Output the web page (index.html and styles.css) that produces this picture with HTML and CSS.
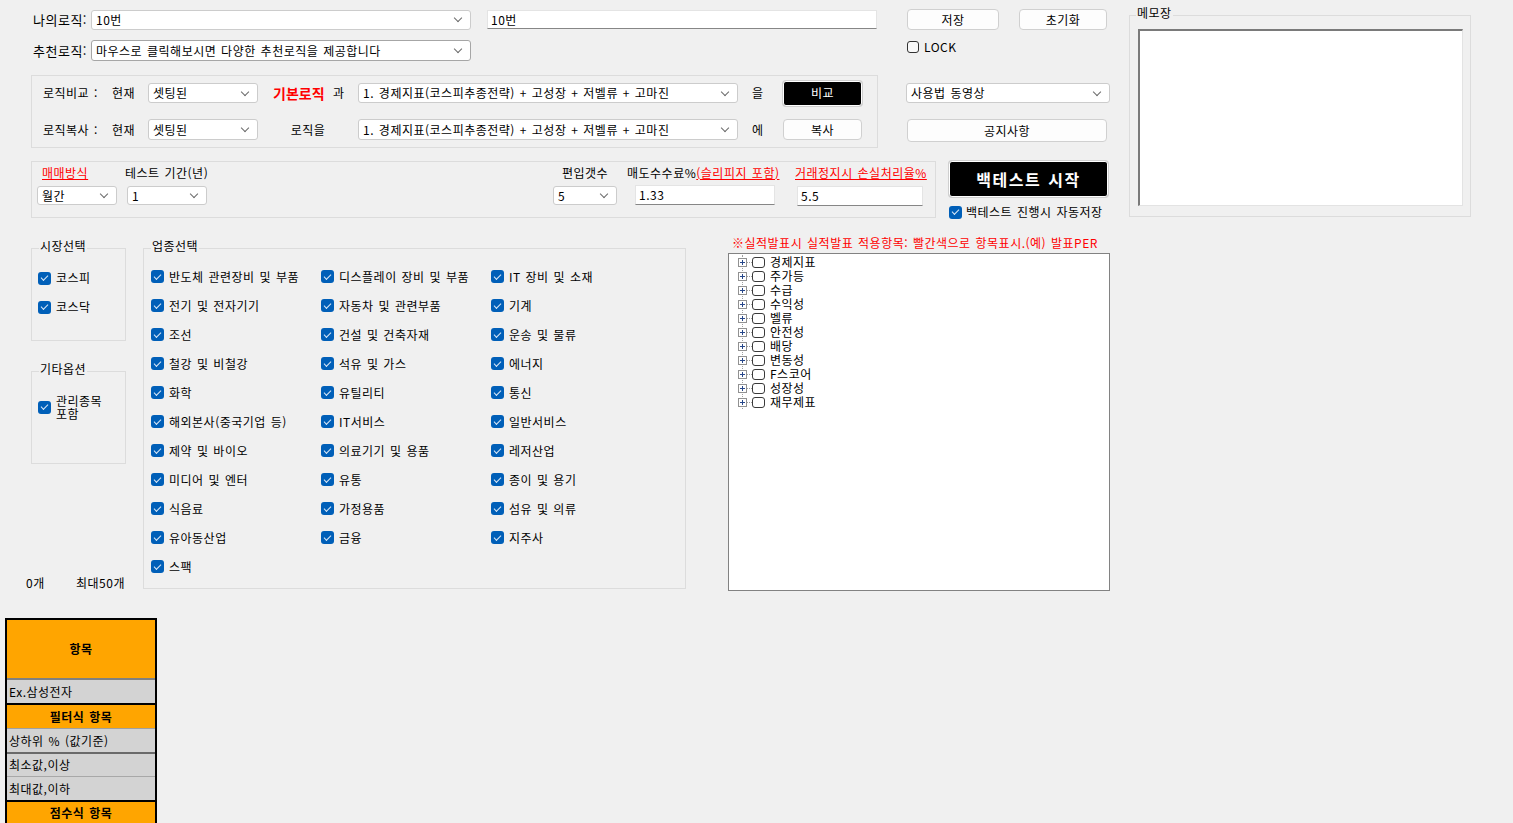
FILE: index.html
```html
<!DOCTYPE html>
<html lang="ko">
<head>
  <meta charset="UTF-8" />
  <title>백테스트</title>
  <link rel="stylesheet" href="styles.css">
</head>
<body>
<div class="form">
  <div class="main">

    <!-- logic name / recommended logic -->
    <div class="line top-1">
      <span class="field-label">나의로직:</span>
      <div class="combo combo-logic">10번</div>
      <div class="textbox name-box">10번</div>
      <div class="btn save-btn">저장</div>
      <div class="btn reset-btn">초기화</div>
    </div>
    <div class="line top-2">
      <span class="field-label">추천로직:</span>
      <div class="combo combo-logic dark">마우스로 클릭해보시면 다양한 추천로직을 제공합니다</div>
      <label class="lock"><span class="box"></span>LOCK</label>
    </div>

    <!-- compare / copy -->
    <div class="compare-row">
      <div class="group compare">
        <div class="line cmp-a">
          <span class="cmp-label">로직비교 :</span>
          <span class="cmp-now">현재</span>
          <div class="combo combo-set">셋팅된</div>
          <span class="base-logic">기본로직</span>
          <span class="cmp-word">과</span>
          <div class="combo combo-logic">1. 경제지표(코스피추종전략) + 고성장 + 저벨류 + 고마진</div>
          <span class="cmp-post">을</span>
          <div class="btn btn-dark cmp-btn">비교</div>
        </div>
        <div class="line cmp-b">
          <span class="cmp-label">로직복사 :</span>
          <span class="cmp-now">현재</span>
          <div class="combo combo-set">셋팅된</div>
          <span class="cmp-mid">로직을</span>
          <div class="combo combo-logic">1. 경제지표(코스피추종전략) + 고성장 + 저벨류 + 고마진</div>
          <span class="cmp-post">에</span>
          <div class="btn cmp-btn copy-btn">복사</div>
        </div>
      </div>
      <div class="side">
        <div class="combo combo-video">사용법 동영상</div>
        <div class="btn notice">공지사항</div>
      </div>
    </div>

    <!-- backtest parameters -->
    <div class="bt-row">
      <div class="group params">
        <div class="param p1">
          <span class="param-label warn pad">매매방식</span>
          <div class="combo combo-small">월간</div>
        </div>
        <div class="param p2">
          <span class="param-label">테스트 기간(년)</span>
          <div class="combo combo-small shift">1</div>
        </div>
        <div class="param p3">
          <span class="param-label center">편입갯수</span>
          <div class="combo combo-count">5</div>
        </div>
        <div class="param p4">
          <span class="param-label">매도수수료%<span class="warn">(슬리피지 포함)</span></span>
          <div class="textbox fee-box">1.33</div>
        </div>
        <div class="param p5">
          <span class="param-label warn">거래정지시 손실처리율%</span>
          <div class="textbox loss-box">5.5</div>
        </div>
      </div>
      <div class="start">
        <div class="btn btn-dark start-btn">백테스트 시작</div>
        <label class="opt autosave"><span class="chk"></span>백테스트 진행시 자동저장</label>
      </div>
    </div>

    <!-- market / industry / item tree -->
    <div class="sel-row">
      <div class="side-col">
        <div class="group market">
          <span class="group-title">시장선택</span>
          <label class="opt"><span class="chk"></span>코스피</label>
          <label class="opt"><span class="chk"></span>코스닥</label>
        </div>
        <div class="group etc">
          <span class="group-title">기타옵션</span>
          <label class="opt tall"><span class="chk"></span><span>관리종목<br>포함</span></label>
        </div>
        <div class="count">
          <span class="count-min">0개</span>
          <span>최대50개</span>
        </div>
      </div>

      <div class="group industry">
        <span class="group-title">업종선택</span>
        <div class="industry-grid">
          <label class="opt"><span class="chk"></span>반도체 관련장비 및 부품</label>
          <label class="opt"><span class="chk"></span>디스플레이 장비 및 부품</label>
          <label class="opt"><span class="chk"></span>IT 장비 및 소재</label>
          <label class="opt"><span class="chk"></span>전기 및 전자기기</label>
          <label class="opt"><span class="chk"></span>자동차 및 관련부품</label>
          <label class="opt"><span class="chk"></span>기계</label>
          <label class="opt"><span class="chk"></span>조선</label>
          <label class="opt"><span class="chk"></span>건설 및 건축자재</label>
          <label class="opt"><span class="chk"></span>운송 및 물류</label>
          <label class="opt"><span class="chk"></span>철강 및 비철강</label>
          <label class="opt"><span class="chk"></span>석유 및 가스</label>
          <label class="opt"><span class="chk"></span>에너지</label>
          <label class="opt"><span class="chk"></span>화학</label>
          <label class="opt"><span class="chk"></span>유틸리티</label>
          <label class="opt"><span class="chk"></span>통신</label>
          <label class="opt"><span class="chk"></span>해외본사(중국기업 등)</label>
          <label class="opt"><span class="chk"></span>IT서비스</label>
          <label class="opt"><span class="chk"></span>일반서비스</label>
          <label class="opt"><span class="chk"></span>제약 및 바이오</label>
          <label class="opt"><span class="chk"></span>의료기기 및 용품</label>
          <label class="opt"><span class="chk"></span>레저산업</label>
          <label class="opt"><span class="chk"></span>미디어 및 엔터</label>
          <label class="opt"><span class="chk"></span>유통</label>
          <label class="opt"><span class="chk"></span>종이 및 용기</label>
          <label class="opt"><span class="chk"></span>식음료</label>
          <label class="opt"><span class="chk"></span>가정용품</label>
          <label class="opt"><span class="chk"></span>섬유 및 의류</label>
          <label class="opt"><span class="chk"></span>유아동산업</label>
          <label class="opt"><span class="chk"></span>금융</label>
          <label class="opt"><span class="chk"></span>지주사</label>
          <label class="opt"><span class="chk"></span>스팩</label>
        </div>
      </div>

      <div class="tree-col">
        <div class="note">※실적발표시 실적발표 적용항목: 빨간색으로 항목표시.(예) 발표PER</div>
        <div class="tree">
          <ul class="nodes">
            <li class="node"><span class="plus"></span><span class="dots"></span><span class="tbox"></span>경제지표</li>
            <li class="node"><span class="plus"></span><span class="dots"></span><span class="tbox"></span>주가등</li>
            <li class="node"><span class="plus"></span><span class="dots"></span><span class="tbox"></span>수급</li>
            <li class="node"><span class="plus"></span><span class="dots"></span><span class="tbox"></span>수익성</li>
            <li class="node"><span class="plus"></span><span class="dots"></span><span class="tbox"></span>벨류</li>
            <li class="node"><span class="plus"></span><span class="dots"></span><span class="tbox"></span>안전성</li>
            <li class="node"><span class="plus"></span><span class="dots"></span><span class="tbox"></span>배당</li>
            <li class="node"><span class="plus"></span><span class="dots"></span><span class="tbox"></span>변동성</li>
            <li class="node"><span class="plus"></span><span class="dots"></span><span class="tbox"></span>F스코어</li>
            <li class="node"><span class="plus"></span><span class="dots"></span><span class="tbox"></span>성장성</li>
            <li class="node"><span class="plus"></span><span class="dots"></span><span class="tbox"></span>재무제표</li>
          </ul>
        </div>
      </div>
    </div>

    <!-- item header grid -->
    <div class="items">
      <div class="cell head big">항목</div>
      <div class="cell c-ex">Ex.삼성전자</div>
      <div class="cell head c-filter">필터식 항목</div>
      <div class="cell c-range">상하위 % (값기준)</div>
      <div class="cell c-min">최소값,이상</div>
      <div class="cell c-max">최대값,이하</div>
      <div class="cell head c-score">점수식 항목</div>
    </div>
  </div>

  <div class="group memo">
    <span class="group-title">메모장</span>
    <div class="memo-area"></div>
  </div>
</div>
</body>
</html>
```

FILE: styles.css
```css
* {
  box-sizing: border-box;
}
html, body {
  margin: 0;
  padding: 0;
}
body {
  width: 1513px;
  height: 823px;
  overflow: hidden;
  background-color: #f0f0f0;
  color: #000;
  font: 12px/14px "Noto Sans CJK KR", "Noto Sans", sans-serif;
  letter-spacing: 0.5px;
  word-spacing: 1px;
}

.form {
  display: flex;
  align-items: flex-start;
}
.main {
  width: 1120px;
  flex: none;
}

.line {
  display: flex;
  align-items: center;
  white-space: nowrap;
}

/* common controls */
.combo {
  display: flex;
  align-items: center;
  flex: none;
  height: 20px;
  padding-left: 4px;
  background-color: #fff;
  border: 1px solid #cccccc;
  border-radius: 3px;
  white-space: nowrap;
}
.combo::after {
  content: "";
  width: 5px;
  height: 5px;
  margin: -3px 9px 0 auto;
  border-right: 1px solid #6b6b6b;
  border-bottom: 1px solid #6b6b6b;
  transform: rotate(45deg);
}
.combo.dark {
  border-color: #a6a6a6;
}
.combo-logic { width: 380px; }
.combo-set { width: 110px; }
.combo-video { width: 204px; }
.combo-small { width: 80px; height: 19px; }
.combo-count { width: 64px; height: 19px; }

.textbox {
  display: flex;
  align-items: center;
  flex: none;
  height: 19px;
  padding-left: 3px;
  background-color: #fff;
  border: 1px solid #e4e4e4;
  border-bottom-color: #868686;
}

.btn {
  display: flex;
  align-items: center;
  justify-content: center;
  flex: none;
  height: 21px;
  background-color: #fdfdfd;
  border: 1px solid #d0d0d0;
  border-radius: 4px;
}
.btn-dark {
  background-color: #000;
  color: #fff;
  border: 1px solid #fff;
  border-radius: 3px;
  box-shadow: 0 0 0 1px #cfcfcf;
}

.opt {
  display: flex;
  align-items: center;
  height: 14px;
  white-space: nowrap;
}
.chk {
  display: inline-flex;
  align-items: center;
  justify-content: center;
  flex: none;
  width: 13px;
  height: 13px;
  margin-right: 5px;
  border-radius: 3px;
  background-color: #005fb8;
}
.chk::after {
  content: "";
  width: 6px;
  height: 3px;
  border-left: 1px solid #dbe9f7;
  border-bottom: 1px solid #dbe9f7;
  transform: translateY(-1px) rotate(-45deg);
}
.box {
  width: 12px;
  height: 12px;
  margin-right: 5px;
  border: 1px solid #333;
  border-radius: 3px;
  background-color: #f9f9f9;
}

.group {
  position: relative;
  border: 1px solid #dcdcdc;
  flex: none;
}
.group-title {
  position: absolute;
  top: -10px;
  left: 7px;
  padding: 0 1px;
  background-color: #f0f0f0;
  line-height: 14px;
}

.warn {
  color: #f00;
  text-decoration: underline;
}

/* top rows */
.top-1 {
  margin-top: 9px;
  height: 21px;
}
.top-2 {
  margin-top: 10px;
  height: 21px;
  align-items: flex-start;
}
.top-2 .combo {
  height: 21px;
}
.field-label {
  width: 87px;
  margin-right: 4px;
  text-align: right;
  font-size: 13px;
  line-height: 21px;
}
.name-box {
  width: 390px;
  margin-left: 16px;
}
.save-btn {
  width: 92px;
  margin-left: 30px;
}
.reset-btn {
  width: 88px;
  margin-left: 20px;
}
.lock {
  display: flex;
  align-items: center;
  margin: 1px 0 0 436px;
  height: 12px;
}

/* compare block */
.compare-row {
  display: flex;
  align-items: flex-start;
  margin-top: 14px;
}
.compare {
  margin-left: 31px;
  width: 847px;
  height: 73px;
  padding-top: 7px;
}
.cmp-a {
  height: 20px;
}
.cmp-b {
  height: 21px;
  margin-top: 16px;
}
.cmp-b .combo {
  height: 21px;
}
.cmp-label {
  width: 69px;
  margin-left: 11px;
}
.cmp-now {
  width: 36px;
}
.base-logic {
  width: 60px;
  margin-left: 15px;
  color: #f00;
  font-weight: bold;
  font-size: 14px;
  letter-spacing: 0;
}
.cmp-word {
  width: 25px;
}
.cmp-mid {
  width: 100px;
  text-align: center;
}
.cmp-post {
  width: 31px;
  margin-left: 14px;
}
.cmp-btn {
  width: 79px;
  height: 25px;
}
.copy-btn {
  height: 21px;
}

.side {
  width: 204px;
  margin-left: 28px;
  padding-top: 8px;
}
.notice {
  width: 200px;
  height: 23px;
  margin: 16px 0 0 1px;
}

/* backtest parameters */
.bt-row {
  display: flex;
  align-items: flex-start;
  margin-top: 13px;
}
.params {
  display: flex;
  width: 905px;
  height: 57px;
  margin-left: 31px;
  padding-top: 4px;
}
.param {
  display: flex;
  flex-direction: column;
  flex: none;
}
.param-label {
  height: 14px;
  white-space: nowrap;
}
.param-label.pad {
  padding-left: 5px;
}
.param-label.center {
  text-align: center;
}
.param .combo,
.param .textbox {
  margin-top: 6px;
}
.p1 { width: 80px; margin-left: 5px; }
.p2 { width: 90px; margin-left: 8px; }
.p2 .shift { margin-left: 2px; }
.p3 { width: 64px; margin-left: 338px; }
.p4 { width: 160px; margin-left: 10px; }
.p5 { width: 134px; margin-left: 8px; }
.p4 .fee-box {
  width: 140px;
  height: 20px;
  margin: 5px 0 0 8px;
}
.p5 .loss-box {
  width: 126px;
  height: 20px;
  margin-left: 2px;
}

.start {
  width: 159px;
  margin-left: 13px;
}
.start-btn {
  height: 36px;
  font-size: 16px;
  font-weight: bold;
  letter-spacing: 1.5px;
}
.autosave {
  height: 12px;
  margin-top: 9px;
}
.autosave .chk {
  margin-right: 4px;
}

/* selection area */
.sel-row {
  display: flex;
  align-items: flex-start;
}
.side-col {
  width: 95px;
  margin-left: 31px;
  flex: none;
}
.market,
.etc {
  height: 93px;
  margin-top: 30px;
  padding: 22px 0 0 6px;
}
.market .opt + .opt {
  margin-top: 15px;
}
.opt.tall {
  height: 26px;
  line-height: 13px;
}
.count {
  display: flex;
  height: 14px;
  margin: 112px 0 0 -5px;
  white-space: nowrap;
}
.count-min {
  width: 50px;
}

.industry {
  width: 543px;
  height: 341px;
  margin: 30px 0 0 17px;
  padding: 13px 0 0 7px;
}
.industry-grid {
  display: grid;
  grid-template-columns: repeat(3, 170px);
  grid-auto-rows: 29px;
  align-items: center;
}

.tree-col {
  width: 382px;
  margin: 18px 0 0 42px;
  flex: none;
}
.note {
  height: 14px;
  padding-left: 4px;
  color: #f00;
  white-space: nowrap;
}
.tree {
  height: 338px;
  margin-top: 3px;
  padding: 1px 0 0 9px;
  background-color: #fff;
  border: 1px solid #828282;
}
.nodes {
  position: relative;
  margin: 0;
  padding: 0;
  list-style: none;
}
/* dotted line joining the root nodes */
.nodes::before {
  content: "";
  position: absolute;
  left: 4px;
  top: 0;
  bottom: 0;
  border-left: 1px dotted #a0a0a0;
}
.node {
  display: flex;
  align-items: center;
  height: 14px;
  white-space: nowrap;
}
.plus {
  position: relative;
  width: 9px;
  height: 9px;
  flex: none;
  border: 1px solid #919191;
  background:
    linear-gradient(#27478a, #27478a) center / 5px 1px no-repeat,
    linear-gradient(#27478a, #27478a) center / 1px 5px no-repeat,
    #fff;
}
.dots {
  width: 5px;
  border-top: 1px dotted #a0a0a0;
}
.tbox {
  width: 13px;
  height: 11px;
  margin-right: 5px;
  flex: none;
  border: 1px solid #3a3a3a;
  border-radius: 3px;
  background-color: #fff;
}

/* item header grid: heights include the top rule of each row */
.items {
  width: 152px;
  margin: 27px 0 0 5px;
  border: 2px solid #000;
  border-bottom: none;
}
.cell {
  padding-left: 2px;
  background-color: #d3d3d3;
  white-space: nowrap;
}
.cell.head {
  background-color: #ffa500;
  font-weight: bold;
  text-align: center;
  padding-left: 0;
}
.cell.big {
  height: 58px;
  line-height: 58px;
}
.c-ex {
  height: 25px;
  line-height: 23px;
  border-top: 2px solid #808080;
}
.c-filter {
  height: 25px;
  line-height: 23px;
  border-top: 2px solid #000;
}
.c-range {
  height: 24px;
  line-height: 23px;
  border-top: 1px solid #a0a0a0;
}
.c-min {
  height: 24px;
  line-height: 22px;
  border-top: 2px solid #6a6a6a;
}
.c-max {
  height: 24px;
  line-height: 23px;
  border-top: 1px solid #a8a8a8;
}
.c-score {
  height: 24px;
  line-height: 22px;
  border-top: 2px solid #000;
}

/* memo panel */
.memo {
  width: 342px;
  height: 202px;
  margin: 15px 0 0 9px;
  padding: 13px 0 0 8px;
}
.memo .group-title {
  left: 6px;
}
.memo-area {
  width: 325px;
  height: 177px;
  background-color: #fff;
  border-top: 2px solid #7a7a7a;
  border-left: 2px solid #7a7a7a;
  border-right: 1px solid #e3e3e3;
  border-bottom: 1px solid #e3e3e3;
}
```
